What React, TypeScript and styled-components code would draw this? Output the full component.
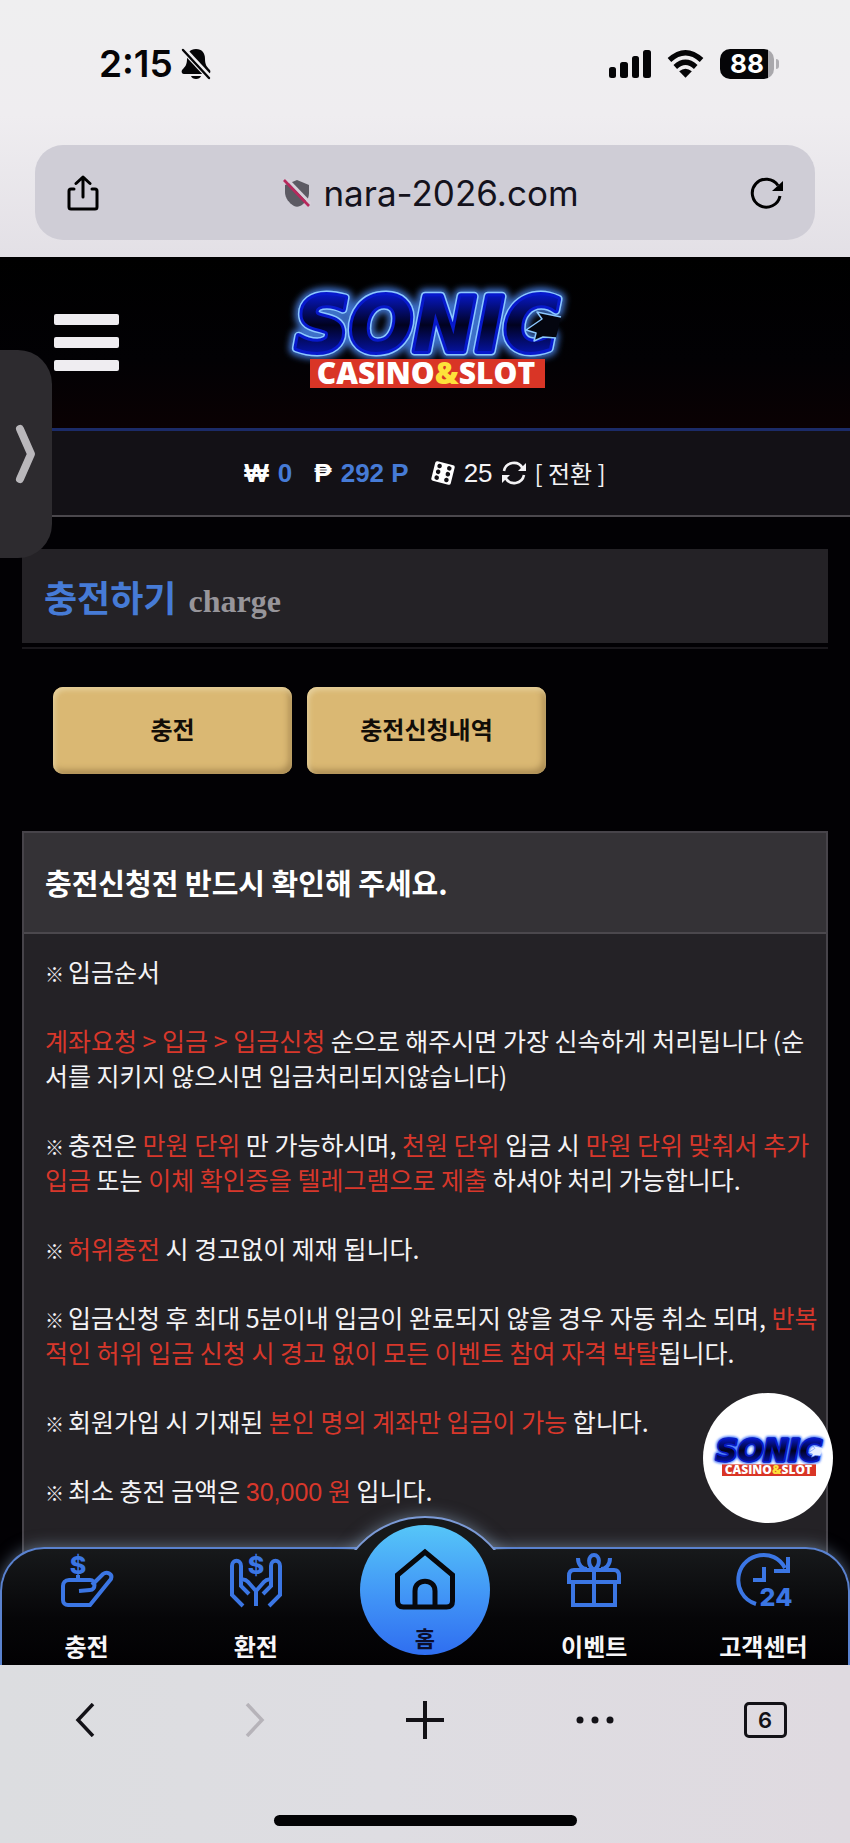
import React from "react";
import styled, { createGlobalStyle } from "styled-components";

const korean = `"Noto Sans CJK KR", "Noto Sans", sans-serif`;
const latin = `"Liberation Sans", "Noto Sans CJK KR", sans-serif`;
const system = `Inter, "Liberation Sans", sans-serif`;

const GlobalStyle = createGlobalStyle`
  * { box-sizing: border-box; }
  body { margin: 0; background: #dedce1; font-family: ${korean}; }
  button { font: inherit; border: 0; padding: 0; background: none; cursor: pointer; }
  a { color: inherit; text-decoration: none; }
  h1, h2, p { margin: 0; }
  svg { display: block; }
`;

const Screen = styled.div`
  display: flex;
  flex-direction: column;
  min-height: 100vh;
`;

/* Browser chrome, top */
const TopChrome = styled.header`
  padding: 43px 35px 17px;
  background: linear-gradient(#efeff0, #efedf0 45%, #e3e0e6);
`;

const StatusBar = styled.div`
  display: flex;
  align-items: center;
  justify-content: space-between;
  height: 42px;
  padding: 0 36px 0 64px;
  font: 600 37px/42px ${system};
  color: #050507;
`;

const StatusGroup = styled.div<{ $gap: number }>`
  display: flex;
  align-items: center;
  gap: ${(p) => p.$gap}px;
`;

const Battery = styled.div`
  display: flex;
  align-items: center;
  gap: 2px;
`;

const BatteryLevel = styled.span`
  width: 54px;
  height: 30px;
  border-radius: 10px;
  background: linear-gradient(90deg, #050507 88%, #a9a8ac 88%);
  color: #fff;
  font: 700 26px/30px ${system};
  text-align: center;
`;

const BatteryTip = styled.span`
  width: 3px;
  height: 10px;
  border-radius: 0 3px 3px 0;
  background: #b0afb3;
`;

const AddressBar = styled.div`
  display: flex;
  align-items: center;
  justify-content: space-between;
  height: 95px;
  margin-top: 60px;
  padding: 0 31px;
  border-radius: 28px;
  background: #cfcdd6;
  color: #14121c;
`;

const Address = styled.div`
  display: flex;
  align-items: center;
  gap: 12px;
  padding-left: 12px;
  font: 400 35px/48px ${system};
`;

/* Web page */
const Site = styled.div`
  position: relative;
  flex: 1;
  display: flex;
  flex-direction: column;
  overflow: hidden;
  background: #020104;
  color: #f4f3f5;
`;

const SiteHeader = styled.div`
  display: grid;
  grid-template-columns: 1fr auto 1fr;
  align-items: center;
  height: 174px;
  padding: 0 54px;
  border-bottom: 3px solid #1b2b68;
  background: linear-gradient(#000, #020104 60%, #0a0103);
`;

const MenuButton = styled.button`
  display: flex;
  flex-direction: column;
  gap: 12px;
  width: 65px;
`;

const MenuLine = styled.span`
  height: 11px;
  border-radius: 2px;
  background: #efedf1;
`;

const AccountBar = styled.div`
  display: flex;
  align-items: center;
  justify-content: center;
  gap: 22px;
  height: 86px;
  border-bottom: 2px solid #4b484d;
  background: #131116;
  font: 400 26px/32px ${latin};
`;

const AccountItem = styled.span`
  display: flex;
  align-items: center;
  gap: 9px;
`;

const Currency = styled.strong`
  color: #fff;
`;

const Amount = styled.strong`
  color: #467bd6;
`;

const SwitchButton = styled.button`
  color: inherit;
  font: 400 24px/32px ${korean};
`;

const Main = styled.main`
  flex: 1;
  padding: 32px 22px 0;
`;

const TitleRow = styled.div`
  padding-bottom: 4px;
  border-bottom: 2px solid #1a181c;
`;

const PageTitle = styled.h1`
  display: flex;
  align-items: baseline;
  gap: 12px;
  height: 94px;
  padding: 22px 22px;
  background: #242226;
  color: #467bd6;
  font: 700 36px/50px ${korean};
`;

const TitleNote = styled.span`
  color: #97959a;
  font: 700 32px/40px "Liberation Serif", serif;
`;

const Tabs = styled.div`
  display: flex;
  gap: 15px;
  padding: 38px 31px 57px;
`;

const TabButton = styled.button`
  width: 239px;
  height: 87px;
  padding-bottom: 4px;
  border-radius: 10px;
  background: #dab873;
  box-shadow: inset 2px 3px 5px #e6d09c, inset -3px -4px 6px #a98a52;
  color: #120e08;
  font: 700 24px/32px ${korean};
`;

const Notice = styled.section`
  border: 2px solid #47444a;
  background: #242226;
`;

const NoticeTitle = styled.h2`
  padding: 29px 21px 30px;
  border-bottom: 2px solid #4b484d;
  background: #343236;
  color: #fff;
  font: 700 29px/40px ${korean};
`;

const NoticeBody = styled.div`
  display: flex;
  flex-direction: column;
  gap: 34px;
  padding: 20px 4px 91px 21px;
  font-size: 25px;
  line-height: 35px;
`;

const Red = styled.span`
  color: #d8372b;
`;

const Figure = styled.span`
  font-family: ${latin};
`;

const Mark = styled.span`
  display: inline-block;
  width: 19px;
  margin-right: 4px;
  font-size: 19px;
  font-weight: 700;
  line-height: 20px;
`;

/* Tab bar at the foot of the site */
const SiteNav = styled.nav`
  position: relative;
  margin-top: -56px;
  height: 118px;
  display: grid;
  grid-template-columns: repeat(5, 1fr);
  border: 2px solid #5a82cf;
  border-bottom: 0;
  border-radius: 44px 44px 0 0;
  background: linear-gradient(#17191b, #060608 60%, #020103);
  box-shadow: 0 0 16px rgba(160, 190, 220, 0.5);
`;

const NavDome = styled.span`
  position: absolute;
  top: -33px;
  left: calc(50% - 91px);
  width: 182px;
  height: 182px;
  border: 2px solid #7b9ad6;
  border-radius: 50%;
  background: #17191b;
  box-shadow: 0 0 16px rgba(160, 190, 220, 0.5);
  clip-path: inset(-30px -30px 148px -30px);
`;

const NavLink = styled.a`
  display: flex;
  flex-direction: column;
  align-items: center;
  justify-content: space-between;
  padding: 4px 0 2px;
  color: #f7f6f8;
  font: 700 24px/34px ${korean};
`;

const HomeLink = styled.a`
  position: relative;
  justify-self: center;
  display: flex;
  flex-direction: column;
  align-items: center;
  justify-content: space-between;
  width: 130px;
  height: 130px;
  margin-top: -24px;
  padding: 23px 0 1px;
  border-radius: 50%;
  background: linear-gradient(#56c6f8, #3f90f6 60%, #2f6ef0);
  color: #0b0d2c;
  font: 700 22px/34px ${korean};
`;

const FloatingLogo = styled.a`
  position: absolute;
  right: 17px;
  bottom: 142px;
  display: flex;
  align-items: center;
  justify-content: center;
  width: 130px;
  height: 130px;
  border-radius: 50%;
  background: #fff;
`;

const SideHandle = styled.button`
  position: absolute;
  left: 0;
  top: 93px;
  display: flex;
  align-items: center;
  justify-content: center;
  width: 52px;
  height: 208px;
  border-radius: 0 34px 34px 0;
  background: #2d2b2f;
`;

/* Browser chrome, bottom */
const BottomChrome = styled.footer`
  display: flex;
  flex-direction: column;
  align-items: center;
  justify-content: space-between;
  height: 178px;
  padding: 30px 0 17px;
  background: linear-gradient(90deg, #dcdde0, #dedde2 45%, #dfdae0);
`;

const Toolbar = styled.div`
  display: grid;
  grid-template-columns: repeat(5, 1fr);
  align-self: stretch;
`;

const ToolButton = styled.button`
  display: flex;
  align-items: center;
  justify-content: center;
  height: 50px;
  color: #131217;

  &:disabled { color: #b6b3b9; }
`;

const TabCount = styled.span`
  width: 43px;
  height: 36px;
  border: 3px solid #131217;
  border-radius: 5px;
  font: 600 22px/30px ${system};
`;

const HomeIndicator = styled.span`
  width: 303px;
  height: 11px;
  border-radius: 6px;
  background: #030305;
`;

const Logo = ({ width, id, light }: { width: number; id: string; light?: boolean }) => (
  <svg width={width} height={(width * 120) / 300} viewBox="0 0 300 120" overflow="visible" role="img" aria-label="SONIC CASINO&SLOT">
    <defs>
      <linearGradient id={`${id}-fill`} x1="0" y1="0" x2="0" y2="1">
        <stop offset="0.15" stopColor="#0617c4" />
        <stop offset="0.5" stopColor="#010220" />
        <stop offset="0.9" stopColor="#0617c4" />
      </linearGradient>
      <filter id={`${id}-glow`} x="-20%" y="-40%" width="140%" height="180%">
        <feGaussianBlur stdDeviation="3" />
      </filter>
    </defs>
    <g fontFamily="DejaVu Sans" fontWeight="700" fontStyle="italic" fontSize="75" textAnchor="middle" strokeLinejoin="round">
      <text x="152" y="68" fill="none" stroke={light ? "#4d7dff" : "#3c6fc8"} strokeWidth="15" filter={`url(#${id}-glow)`}>SONIC</text>
      <text x="152" y="68" fill="none" stroke={light ? "#0a22b8" : "#8cc8ff"} strokeWidth="9">SONIC</text>
      <text x="152" y="68" fill={`url(#${id}-fill)`} stroke="#0719cc" strokeWidth="6">SONIC</text>
      <text x="152" y="68" fill={`url(#${id}-fill)`}>SONIC</text>
    </g>
    <path
      d="M286 34L262 29l5 7-16 11 10 3-2 8 9-4 13 1"
      fill={light ? "#e8eeff" : "#04060f"}
      stroke={light ? "#4d7dff" : "#8cc8ff"}
      strokeWidth="1.500"
      strokeLinejoin="round"
    />
    <rect x="35" y="76" width="235" height="29" fill="#d93526" />
    <text x="151" y="101" fontFamily="Open Sans" fontWeight="800" fontSize="30" textAnchor="middle" fill="#fff">
      CASINO<tspan fill="#fde23a">&amp;</tspan>SLOT
    </text>
  </svg>
);

const BellOff = () => (
  <svg width="30" height="32" viewBox="0 0 30 32">
    <path d="M15 1c-6 0-9 4-9 10 0 6-2 8-5 11-1 2 0 4 2 4h24c2 0 3-2 2-4-3-3-5-5-5-11 0-6-3-10-9-10z" fill="#050507" />
    <path d="M10 28h10c-1 4-9 4-10 0z" fill="#050507" />
    <path d="M2 1l27 29" stroke="#efeef0" strokeWidth="6" />
    <path d="M2 2l26 28" stroke="#050507" strokeWidth="2.4" strokeLinecap="round" />
  </svg>
);

const Signal = () => (
  <svg width="42" height="28" viewBox="0 0 42 28" fill="#050507">
    <rect x="0" y="17" width="7" height="11" rx="2.5" />
    <rect x="11" y="12" width="8" height="16" rx="2.5" />
    <rect x="23" y="6" width="7" height="22" rx="2.5" />
    <rect x="34" y="0" width="8" height="28" rx="2.5" />
  </svg>
);

const Wifi = () => (
  <svg width="37" height="28" viewBox="0 0 38 28" fill="none" stroke="#050507" strokeWidth="5.500">
    <path d="M2.500 10Q19-5 35.500 10" />
    <path d="M8.500 17Q19 7.500 29.500 17" />
    <path d="M19 28l-6.500-6.500q6.500-5.500 13 0z" fill="#050507" stroke="none" />
  </svg>
);

const Share = () => (
  <svg width="34" height="36" viewBox="0 0 34 36" fill="none" stroke="currentColor" strokeWidth="3" strokeLinecap="round" strokeLinejoin="round">
    <path d="M8 14H5a2 2 0 0 0-2 2v16a2 2 0 0 0 2 2h24a2 2 0 0 0 2-2V16a2 2 0 0 0-2-2H26" />
    <path d="M17 22V2M10 8.500L17 2l7 6.500" />
  </svg>
);

const ShieldOff = () => (
  <svg width="28" height="28" viewBox="0 0 28 28">
    <path d="M14 1l12 5v8c0 7-5 11-9 13-2 1-4 1-6 0C6 24 2 19 2 13V6z" fill="#5c5a63" />
    <path d="M3-1l25 26" stroke="#d6d0da" strokeWidth="3" />
    <path d="M1 1l25 26" stroke="#b8285c" strokeWidth="2.600" />
  </svg>
);

const Reload = () => (
  <svg width="34" height="34" viewBox="0 0 34 34" fill="none" stroke="currentColor" strokeWidth="3">
    <path d="M30 20A14 14 0 1 1 28 9.500" />
    <path d="M33 5v10H22z" fill="currentColor" stroke="none" />
  </svg>
);

const Dice = () => (
  <svg width="24" height="26" viewBox="0 0 24 26">
    <g transform="rotate(14 12 13)">
      <rect x="2" y="3" width="20" height="20" rx="2" fill="#fff" />
      <g fill="#131116">
        <circle cx="7" cy="7" r="2.300" />
        <circle cx="7" cy="13" r="2.300" />
        <circle cx="7" cy="19" r="2.300" />
        <circle cx="17" cy="7" r="2.300" />
        <circle cx="17" cy="13" r="2.300" />
        <circle cx="17" cy="19" r="2.300" />
      </g>
    </g>
  </svg>
);

const Sync = () => (
  <svg width="24" height="24" viewBox="0 0 24 24" fill="none" stroke="currentColor" strokeWidth="2.600">
    <path d="M2 10A10 10 0 0 1 20.500 7M22 14A10 10 0 0 1 3.500 17" />
    <path d="M24 2v8h-8zM0 22v-8h8z" fill="currentColor" stroke="none" />
  </svg>
);

const Chevron = ({ flip }: { flip?: boolean }) => (
  <svg width="20" height="34" viewBox="0 0 20 34" fill="none" stroke="currentColor" strokeWidth="3.500">
    <path d={flip ? "M2 1l15 16L2 33" : "M18 1L3 17l15 16"} />
  </svg>
);

const NavIcon = styled.svg.attrs({ width: 54, height: 54, viewBox: "0 0 54 54", fill: "none", stroke: "#3b76e4", strokeWidth: 4 })`
  overflow: visible;
`;

const IconText = styled.text.attrs({ fill: "#3b76e4", stroke: "none", textAnchor: "middle" })`
  font: 800 25px/1 ${system};
`;

const ChargeIcon = () => (
  <NavIcon>
    <IconText x="18" y="21">$</IconText>
    <path d="M18 22v5M19 38l11-1c6 0 6-10 0-10H9c-4 0-6 3-6 6v14c0 3 2 5 5 5h22l21-26c2-5-4-8-8-5L32 32" />
  </NavIcon>
);

const ExchangeIcon = () => (
  <NavIcon>
    <IconText x="27" y="21">$</IconText>
    <path d="M14 53L3 42V13c0-7 9-7 9 0v20l8 8M12 27c4-2 6 1 8 3l7 8v15M40 53l11-11V13c0-7-9-7-9 0v20l-8 8M42 27c-4-2-6 1-8 3l-7 8" />
  </NavIcon>
);

const GiftIcon = () => (
  <NavIcon>
    <path d="M2 29V23c0-4 2-6 5-6h40c3 0 5 2 5 6v6zM6 29v23h42V29M27 17v35M27 17c-7-5-6-15 0-15s7 10 0 15M11 5c0 7 4 11 9 11M43 5c0 7-4 11-9 11" />
  </NavIcon>
);

const SupportIcon = () => (
  <NavIcon>
    <path d="M20 51C7 47 0 34 3 21 8 0 38-6 49 15M52 4v14H38M28 14v13H17" />
    <IconText x="40" y="53">24</IconText>
  </NavIcon>
);

const HomeIcon = () => (
  <svg width="62" height="62" viewBox="0 0 62 62" fill="none" stroke="#07080c" strokeWidth="5">
    <path d="M31 4L3.500 27v26c0 4 2 6 6 6h43c4 0 6-2 6-6V27z" />
    <path d="M21 59V43c0-13 20-13 20 0v16" />
  </svg>
);

const App = () => (
  <Screen>
    <GlobalStyle />
    <TopChrome>
      <StatusBar>
        <StatusGroup $gap={8}>
          <span>2:15</span>
          <BellOff />
        </StatusGroup>
        <StatusGroup $gap={16}>
          <Signal />
          <Wifi />
          <Battery>
            <BatteryLevel>88</BatteryLevel>
            <BatteryTip />
          </Battery>
        </StatusGroup>
      </StatusBar>
      <AddressBar>
        <button aria-label="Share"><Share /></button>
        <Address>
          <ShieldOff />
          <span>nara-2026.com</span>
        </Address>
        <button aria-label="Reload"><Reload /></button>
      </AddressBar>
    </TopChrome>

    <Site>
      <SiteHeader>
        <MenuButton aria-label="Menu">
          <MenuLine />
          <MenuLine />
          <MenuLine />
        </MenuButton>
        <a href="#home"><Logo id="main" width={300} /></a>
      </SiteHeader>

      <AccountBar>
        <AccountItem><Currency>₩</Currency><Amount>0</Amount></AccountItem>
        <AccountItem><Currency>₱</Currency><Amount>292 P</Amount></AccountItem>
        <AccountItem>
          <Dice />
          <span>25</span>
          <Sync />
          <SwitchButton>[ 전환 ]</SwitchButton>
        </AccountItem>
      </AccountBar>

      <Main>
        <TitleRow>
          <PageTitle>
            충전하기
            <TitleNote>charge</TitleNote>
          </PageTitle>
        </TitleRow>
        <Tabs>
          <TabButton>충전</TabButton>
          <TabButton>충전신청내역</TabButton>
        </Tabs>
        <Notice>
          <NoticeTitle>충전신청전 반드시 확인해 주세요.</NoticeTitle>
          <NoticeBody>
            <p><Mark>※</Mark>입금순서</p>
            <p><Red>계좌요청 &gt; 입금 &gt; 입금신청</Red> 순으로 해주시면 가장 신속하게 처리됩니다 (순서를 지키지 않으시면 입금처리되지않습니다)</p>
            <p><Mark>※</Mark>충전은 <Red>만원 단위</Red> 만 가능하시며, <Red>천원 단위</Red> 입금 시 <Red>만원 단위 맞춰서 추가입금</Red> 또는 <Red>이체 확인증을 텔레그램으로 제출</Red> 하셔야 처리 가능합니다.</p>
            <p><Mark>※</Mark><Red>허위충전</Red> 시 경고없이 제재 됩니다.</p>
            <p><Mark>※</Mark>입금신청 후 최대 5분이내 입금이 완료되지 않을 경우 자동 취소 되며, <Red>반복적인 허위 입금 신청 시 경고 없이 모든 이벤트 참여 자격 박탈</Red>됩니다.</p>
            <p><Mark>※</Mark>회원가입 시 기재된 <Red>본인 명의 계좌만 입금이 가능</Red> 합니다.</p>
            <p><Mark>※</Mark>최소 충전 금액은 <Red><Figure>30,000</Figure> 원</Red> 입니다.</p>
          </NoticeBody>
        </Notice>
      </Main>

      <SiteNav>
        <NavDome />
        <NavLink href="#charge"><ChargeIcon />충전</NavLink>
        <NavLink href="#exchange"><ExchangeIcon />환전</NavLink>
        <HomeLink href="#home"><HomeIcon />홈</HomeLink>
        <NavLink href="#event"><GiftIcon />이벤트</NavLink>
        <NavLink href="#support"><SupportIcon />고객센터</NavLink>
      </SiteNav>

      <FloatingLogo href="#home"><Logo id="float" width={120} light /></FloatingLogo>
      <SideHandle aria-label="Open panel">
        <svg width="24" height="62" viewBox="0 0 24 62" fill="none" stroke="#b9b7bb" strokeWidth="8" strokeLinecap="round" strokeLinejoin="round">
          <path d="M6 6l11 25L6 56" />
        </svg>
      </SideHandle>
    </Site>

    <BottomChrome>
      <Toolbar>
        <ToolButton aria-label="Back"><Chevron /></ToolButton>
        <ToolButton aria-label="Forward" disabled><Chevron flip /></ToolButton>
        <ToolButton aria-label="New tab">
          <svg width="40" height="40" viewBox="0 0 40 40" stroke="currentColor" strokeWidth="4"><path d="M20 1v38M1 20h38" /></svg>
        </ToolButton>
        <ToolButton aria-label="More">
          <svg width="38" height="8" viewBox="0 0 38 8" fill="currentColor"><circle cx="4" cy="4" r="3.500" /><circle cx="19" cy="4" r="3.500" /><circle cx="34" cy="4" r="3.500" /></svg>
        </ToolButton>
        <ToolButton aria-label="Tabs"><TabCount>6</TabCount></ToolButton>
      </Toolbar>
      <HomeIndicator />
    </BottomChrome>
  </Screen>
);

export default App;
